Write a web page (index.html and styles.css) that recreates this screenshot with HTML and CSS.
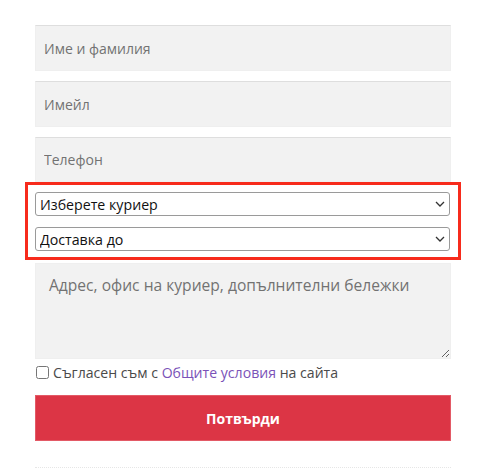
FILE: index.html
```html
<!DOCTYPE html>
<html lang="bg">
<head>
<meta charset="utf-8">
<title>Поръчка</title>
<link rel="stylesheet" href="styles.css">
</head>
<body>
<form class="order-form">
  <input class="field" type="text" placeholder="Име и фамилия">
  <input class="field" type="email" placeholder="Имейл">
  <input class="field field-last" type="tel" placeholder="Телефон">
  <div class="highlight">
    <div class="select-wrap">
      <select class="select"><option>Изберете куриер</option></select>
      <svg class="chevron" width="10" height="6" viewBox="0 0 10 6"><path d="M1 1l4 4 4-4" fill="none" stroke="#333" stroke-width="1.3"/></svg>
    </div>
    <div class="select-wrap">
      <select class="select"><option>Доставка до</option></select>
      <svg class="chevron" width="10" height="6" viewBox="0 0 10 6"><path d="M1 1l4 4 4-4" fill="none" stroke="#333" stroke-width="1.3"/></svg>
    </div>
  </div>
  <textarea class="notes" placeholder="Адрес, офис на куриер, допълнителни бележки"></textarea>
  <label class="terms"><input type="checkbox" class="check"><span>Съгласен съм с <a href="#" class="terms-link">Общите условия</a> на сайта</span></label>
  <button type="button" class="submit">Потвърди</button>
  <div class="divider"></div>
</form>
</body>
</html>
```

FILE: styles.css
```css
* { box-sizing: border-box; }
html, body { margin: 0; padding: 0; background: #fff; }
body { font-family: "Open Sans", "Liberation Sans", sans-serif; }

.order-form {
  display: flex;
  flex-direction: column;
  width: 416px;
  margin: 25px 0 0 35px;
}

.field {
  display: block;
  width: 100%;
  height: 46px;
  margin: 0 0 10px 0;
  padding: 0 8px;
  border: 1px solid #efefef;
  border-top-color: #dedede;
  background: #f2f2f2;
  font-family: inherit;
  font-size: 14px;
  font-weight: 500;
  color: #333;
  outline: none;
}
.field-last { height: 45px; margin-bottom: 0; }
.field::placeholder, .notes::placeholder { color: #727272; opacity: 1; }

.highlight {
  display: flex;
  flex-direction: column;
  gap: 11px;
  margin: 0 -10px;
  padding: 7px 8px 6px 7px;
  border: 3px solid #f72b1c;
  background: #fff;
}

.select-wrap { position: relative; }
.select {
  display: block;
  width: 100%;
  height: 24px;
  padding: 0 20px 0 4px;
  border: 1px solid #9a9a9a;
  border-radius: 3px;
  background: #fff;
  font-family: inherit;
  font-size: 14.2px;
  font-weight: 500;
  color: #111;
  appearance: none;
  -webkit-appearance: none;
  outline: none;
}
.chevron {
  position: absolute;
  right: 5px;
  top: 9px;
  pointer-events: none;
}

.notes {
  display: block;
  width: 100%;
  height: 96px;
  margin-top: 3px;
  padding: 10px 13px;
  border: 1px solid #efefef;
  background: #f2f2f2;
  font-family: inherit;
  font-size: 15.6px;
  font-weight: 500;
  line-height: 22px;
  color: #333;
  resize: vertical;
  outline: none;
}

.terms {
  display: flex;
  align-items: center;
  gap: 4px;
  height: 24px;
  margin-top: 1px;
  font-size: 14.1px;
  font-weight: 500;
  color: #4a4a4a;
}
.check {
  width: 13px;
  height: 13px;
  margin: 0 0 0 1px;
}
.terms-link { color: #7a52b8; text-decoration: none; }

.submit {
  display: block;
  width: 100%;
  height: 46px;
  margin-top: 11px;
  border: 1px solid #e35a66;
  background: #dc3545;
  color: #fff;
  font-family: inherit;
  font-size: 14px;
  font-weight: 700;
  cursor: pointer;
}

.divider {
  margin-top: 26px;
  border-top: 1px dotted #e6e6e6;
}
```
